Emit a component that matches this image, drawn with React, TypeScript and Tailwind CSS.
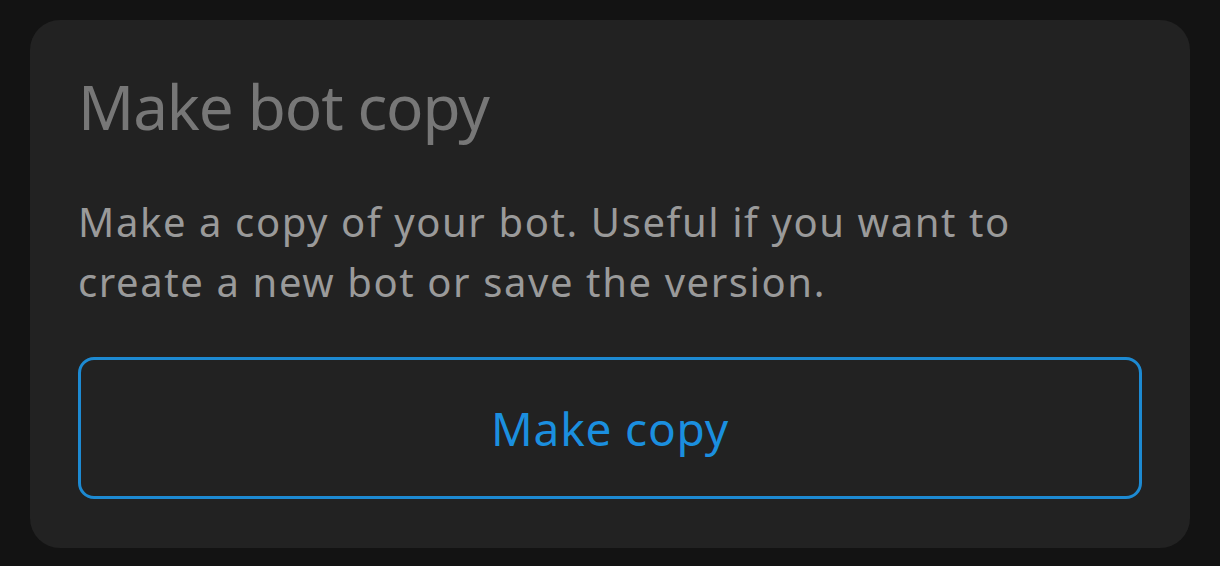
export default function App() {
  return (
    <div className="w-full h-[566px] bg-[#131313] px-[30px] pt-[20px]" style={{ fontFamily: '"Noto Sans", sans-serif' }}>
      <div className="h-[528px] rounded-[30px] bg-[#222222] px-[48px] pt-[55px] flex flex-col">
        <h1 className="text-[62px] leading-[62px] tracking-[-1.1px] text-[#777777] font-normal">Make bot copy</h1>
        <p className="mt-[55px] text-[40px] leading-[60px] tracking-[1.6px] text-[#9a9a9a]">
          Make a copy of your bot. Useful if you want to
          <br />
          create a new bot or save the version.
        </p>
        <button className="mt-[45px] h-[142px] w-full rounded-[16px] border-[3px] border-[#1d8ad2] flex items-center justify-center text-[46px] leading-[46px] tracking-[0.8px] text-[#1b8fdf]">
          Make copy
        </button>
      </div>
    </div>
  );
}
